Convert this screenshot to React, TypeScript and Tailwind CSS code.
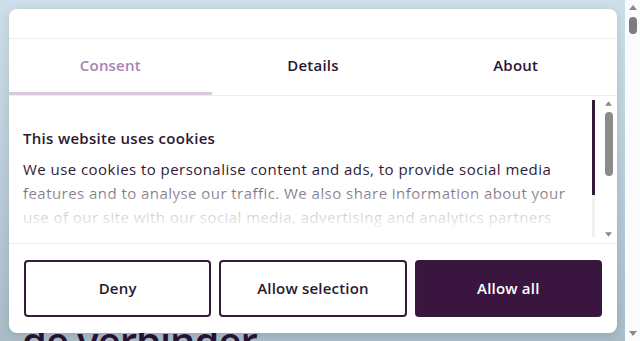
import React from 'react';

const font = { fontFamily: '"Open Sans", "Noto Sans", sans-serif' };

// Small triangle arrow used by the fake scrollbars
const Arrow = ({ up, className }: { up?: boolean; className?: string }) => (
  <svg width="8" height="5" viewBox="0 0 8 5" className={className}>
    <path d={up ? 'M0 5 L4 0 L8 5 Z' : 'M0 0 L8 0 L4 5 Z'} fill="#8a8a8a" />
  </svg>
);

function Tab({ label, active }: { label: string; active?: boolean }) {
  return (
    <div
      className={`flex-1 flex items-center justify-center h-[56px] text-[15px] font-semibold tracking-[0.2px] ${
        active ? 'text-[#a684b0] border-b-[3px] border-[#d8c9dc]' : 'text-[#2b1832] border-b-[3px] border-transparent'
      }`}
    >
      {label}
    </div>
  );
}

function App() {
  const buttonBase =
    'flex-1 h-[57px] rounded-[4px] border-2 border-[#341a3b] flex items-center justify-center text-[15px] font-semibold tracking-[0.2px]';

  return (
    <div className="relative flex w-[640px] h-[341px] overflow-hidden" style={font}>
      {/* page behind the dialog */}
      <div className="flex-1 flex flex-col justify-end bg-gradient-to-b from-[#cfdfe9] to-[#a9bcc7] pl-[22px]">
        <div className="text-[40px] leading-none font-semibold text-[#2a1233] tracking-[-1px] translate-y-[20px]">
          de verbinder
        </div>
      </div>

      {/* page scrollbar */}
      <div className="w-[15px] bg-[#fbfbfb] flex flex-col items-center py-[5px]">
        <Arrow up />
        <div className="mt-[7px] w-[8px] h-[17px] rounded-full bg-[#7c7c7c]" />
        <div className="flex-1" />
        <Arrow />
      </div>

      {/* consent dialog */}
      <div className="absolute left-[9px] top-[9px] w-[608px] h-[324px] bg-white rounded-lg shadow-[0_2px_10px_rgba(0,0,0,0.12)] flex flex-col overflow-hidden">
        <div className="h-[30px] border-b border-[#eeeeee]" />

        <div className="flex border-b border-[#eeeeee]">
          <Tab label="Consent" active />
          <Tab label="Details" />
          <Tab label="About" />
        </div>

        <div className="flex h-[148px] border-b border-[#eeeeee]">
          <div className="relative flex-1 overflow-hidden pl-[14px] pt-[31px] pr-[10px]">
            <h2 className="text-[15px] font-semibold text-[#2b1832] tracking-[0.3px] leading-[22px]">
              This website uses cookies
            </h2>
            <p className="mt-[8px] text-[15px] leading-[24px] text-[#2b1832] tracking-[0.45px]">
              We use cookies to personalise content and ads, to provide social media features and to analyse our
              traffic. We also share information about your use of our site with our social media, advertising and
              analytics partners who may combine it with other information that you've provided to them or that
              they've collected from your use of their services.
            </p>
            <div className="absolute inset-x-0 bottom-0 h-[72px] bg-gradient-to-b from-white/0 from-0% via-white/70 via-50% to-white to-85%" />
          </div>

          {/* thin custom track */}
          <div className="w-[3px] mt-[4px] mb-[6px] flex flex-col">
            <div className="h-[95px] bg-[#341a3b]" />
            <div className="flex-1 bg-[#f1f1f1]" />
          </div>

          {/* inner native-looking scrollbar */}
          <div className="w-[11px] ml-[8px] mr-[3px] flex flex-col items-center pt-[5px] pb-[6px]">
            <Arrow up className="w-[7px]" />
            <div className="mt-[6px] w-[8px] h-[64px] rounded-full bg-[#8c8c8c]" />
            <div className="flex-1" />
            <Arrow className="w-[7px]" />
          </div>
        </div>

        <div className="flex gap-[8px] px-[15px] pt-[16px]">
          <button className={`${buttonBase} bg-white text-[#2b1832]`}>Deny</button>
          <button className={`${buttonBase} bg-white text-[#2b1832]`}>Allow selection</button>
          <button className={`${buttonBase} bg-[#3a1540] text-white`}>Allow all</button>
        </div>
      </div>
    </div>
  );
}

export default App;
